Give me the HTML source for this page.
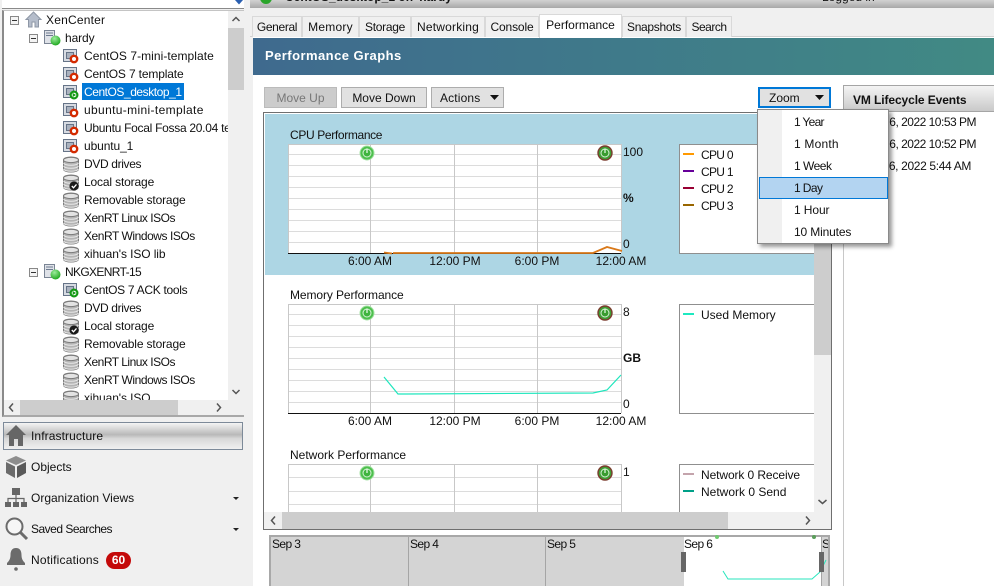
<!DOCTYPE html>
<html><head><meta charset="utf-8"><style>
html,body{margin:0;padding:0}
body{width:994px;height:586px;overflow:hidden;position:relative;background:#f0f0f0;font:12px/18px "Liberation Sans",sans-serif;color:#111;letter-spacing:0}
div,span{position:absolute;white-space:nowrap;box-sizing:border-box}
svg{position:absolute;overflow:visible}
.t{height:18px;line-height:18px}
.tab{top:16px;height:21px;line-height:21px;background:#f0f0f0;border:1px solid #d9d9d9;border-bottom:0;text-align:center}
.btn{top:87px;height:21px;line-height:20px;background:#e1e1e1;border:1px solid #adadad;text-align:center}
.sb{background:#f0f0f0}.th{background:#cdcdcd}
.leg{background:#fff;border:1px solid #8f8f8f;width:140px;height:110px}
.sw{width:11px;height:2px}
.ax{text-align:center;width:70px}
</style></head><body>
<svg width="0" height="0" style="position:absolute"><defs>
<radialGradient id="gg" cx=".4" cy=".3" r=".8"><stop offset="0" stop-color="#9cec9c"/><stop offset="1" stop-color="#0f9f0f"/></radialGradient>
<symbol id="vm" viewBox="0 0 18 18"><rect x=".5" y="2.500" width="13" height="12" fill="#d7dbe2" stroke="#667488"/><rect x="3.500" y="5.500" width="7" height="6" fill="#aab2bf" stroke="#667488"/></symbol>
<symbol id="off" viewBox="0 0 18 18"><use href="#vm" width="18" height="18"/><circle cx="11" cy="12" r="3.200" fill="#fff" stroke="#d42a00" stroke-width="2.400"/></symbol>
<symbol id="on" viewBox="0 0 18 18"><use href="#vm" width="18" height="18"/><circle cx="11" cy="12" r="3.400" fill="#fff" stroke="#149a14" stroke-width="2.200"/><path d="M9.700 10l3.400 2-3.400 2z" fill="#149a14"/></symbol>
<symbol id="disk" viewBox="0 0 18 18"><path d="M.5 5c0-4 15-4 15 0v9c0 4-15 4-15 0z" fill="#b4b4b4" stroke="#7b7b7b"/><ellipse cx="8" cy="5" rx="7.500" ry="2.600" fill="#e3e3e3" stroke="#7b7b7b"/><path d="M.5 8c2 3 13 3 15 0M.5 11c2 3 13 3 15 0M.5 14c2 3 13 3 15 0" fill="none" stroke="#e9e9e9"/></symbol>
<symbol id="local" viewBox="0 0 18 18"><use href="#disk" width="18" height="18"/><circle cx="11" cy="13" r="4.600" fill="#1a1a1a"/><path d="M8.800 13l1.700 1.800 3-3.400" fill="none" stroke="#fff" stroke-width="1.300"/></symbol>
<symbol id="host" viewBox="0 0 18 18"><rect x=".5" y="1.500" width="10" height="13" fill="#dfe2e8" stroke="#7a8494"/><path d="M2 4h7M2 6.500h7" stroke="#6d7b90"/><circle cx="11.500" cy="11.500" r="5" fill="url(#gg)"/></symbol>
<symbol id="pw" viewBox="0 0 16 16"><circle cx="8" cy="8" r="7" fill="#4dbf4d" stroke="#a5e2a5" stroke-width="1"/><circle cx="8" cy="8" r="4" fill="#3fb43f" stroke="#d7f2d7" stroke-width="1"/><path d="M8 3.500v4.500" stroke="#f2fff2" stroke-width="1.200"/></symbol>
<symbol id="pd" viewBox="0 0 16 16"><circle cx="8" cy="8" r="7" fill="#3f9e35" stroke="#7b3b2e" stroke-width="1.400"/><circle cx="8" cy="8" r="4" fill="#399c30" stroke="#d7f2d7" stroke-width="1"/><path d="M8 3.500v4.500" stroke="#eaffea" stroke-width="1.200"/></symbol>
</defs></svg>

<!-- left: search -->
<div style="left:2px;top:0;width:226px;height:9px;background:#fff;border-bottom:1px solid #8a8a8a;overflow:hidden"><span style="left:4px;top:-13px;color:#777">Search...</span></div>
<div style="left:228px;top:0;width:16px;height:9px;background:#fff;border-bottom:1px solid #8a8a8a"></div>
<svg style="left:235px;top:0" width="8" height="6"><path d="M0 0h8l-4 4.500z" fill="#2a5fb0"/></svg>

<!-- tree -->
<div style="left:2px;top:10px;width:242px;height:407px;background:#fff;border-style:solid;border-color:#c4c4c4 #f0f0f0 #a8a8a8 #8a8a8a;border-width:1px 0 2px 2px"></div>
<div style="left:4px;top:11px;width:224px;height:389px;overflow:hidden;background:#fff">
<svg style="left:6px;top:5px" width="9" height="9"><rect x=".5" y=".5" width="8" height="8" fill="#f4f4f4" stroke="#888"/><path d="M2 4.500h5" stroke="#333"/></svg>
<svg style="left:21px;top:0" width="17" height="17" viewBox="0 0 17 17"><path d="M8.500 1L1 8.500h2.500V16h3.500v-5h3v5h3.500V8.500H16z" fill="#b5bdcb" stroke="#8e97a6"/></svg>
<div class="t" style="left:42px;top:0;letter-spacing:.2px">XenCenter</div>
<svg style="left:25px;top:23px" width="9" height="9"><rect x=".5" y=".5" width="8" height="8" fill="#f4f4f4" stroke="#888"/><path d="M2 4.500h5" stroke="#333"/></svg>
<svg style="left:40px;top:18px" width="18" height="18"><use href="#host"/></svg>
<div class="t" style="left:61px;top:18px;letter-spacing:-.1px">hardy</div>

<svg style="left:59px;top:36px" width="18" height="18"><use href="#off"/></svg><div class="t" style="left:80px;top:36px;letter-spacing:.05px">CentOS 7-mini-template</div>
<svg style="left:59px;top:54px" width="18" height="18"><use href="#off"/></svg><div class="t" style="left:80px;top:54px;letter-spacing:-.15px">CentOS 7 template</div>
<svg style="left:59px;top:72px" width="18" height="18"><use href="#on"/></svg><div class="t" style="left:78px;top:72px;width:102px;background:#0078d7;color:#fff;padding-left:2px;height:17px;letter-spacing:-.45px">CentOS_desktop_1</div>
<svg style="left:59px;top:90px" width="18" height="18"><use href="#off"/></svg><div class="t" style="left:80px;top:90px;letter-spacing:.35px">ubuntu-mini-template</div>
<svg style="left:59px;top:108px" width="18" height="18"><use href="#off"/></svg><div class="t" style="left:80px;top:108px;letter-spacing:-.28px">Ubuntu Focal Fossa 20.04 template</div>
<svg style="left:59px;top:126px" width="18" height="18"><use href="#off"/></svg><div class="t" style="left:80px;top:126px;letter-spacing:-.1px">ubuntu_1</div>
<svg style="left:59px;top:144px" width="18" height="18"><use href="#disk"/></svg><div class="t" style="left:80px;top:144px;letter-spacing:-.35px">DVD drives</div>
<svg style="left:59px;top:162px" width="18" height="18"><use href="#local"/></svg><div class="t" style="left:80px;top:162px;letter-spacing:-.15px">Local storage</div>
<svg style="left:59px;top:180px" width="18" height="18"><use href="#disk"/></svg><div class="t" style="left:80px;top:180px;letter-spacing:-.15px">Removable storage</div>
<svg style="left:59px;top:198px" width="18" height="18"><use href="#disk"/></svg><div class="t" style="left:80px;top:198px;letter-spacing:-.5px">XenRT Linux ISOs</div>
<svg style="left:59px;top:216px" width="18" height="18"><use href="#disk"/></svg><div class="t" style="left:80px;top:216px;letter-spacing:-.45px">XenRT Windows ISOs</div>
<svg style="left:59px;top:234px" width="18" height="18"><use href="#disk"/></svg><div class="t" style="left:80px;top:234px;letter-spacing:-.1px">xihuan's ISO lib</div>

<svg style="left:25px;top:257px" width="9" height="9"><rect x=".5" y=".5" width="8" height="8" fill="#f4f4f4" stroke="#888"/><path d="M2 4.500h5" stroke="#333"/></svg>
<svg style="left:40px;top:252px" width="18" height="18"><use href="#host"/></svg>
<div class="t" style="left:61px;top:252px;letter-spacing:-.65px">NKGXENRT-15</div>
<svg style="left:59px;top:270px" width="18" height="18"><use href="#on"/></svg><div class="t" style="left:80px;top:270px;letter-spacing:-.3px">CentOS 7 ACK tools</div>
<svg style="left:59px;top:288px" width="18" height="18"><use href="#disk"/></svg><div class="t" style="left:80px;top:288px;letter-spacing:-.35px">DVD drives</div>
<svg style="left:59px;top:306px" width="18" height="18"><use href="#local"/></svg><div class="t" style="left:80px;top:306px;letter-spacing:-.15px">Local storage</div>
<svg style="left:59px;top:324px" width="18" height="18"><use href="#disk"/></svg><div class="t" style="left:80px;top:324px;letter-spacing:-.15px">Removable storage</div>
<svg style="left:59px;top:342px" width="18" height="18"><use href="#disk"/></svg><div class="t" style="left:80px;top:342px;letter-spacing:-.5px">XenRT Linux ISOs</div>
<svg style="left:59px;top:360px" width="18" height="18"><use href="#disk"/></svg><div class="t" style="left:80px;top:360px;letter-spacing:-.45px">XenRT Windows ISOs</div>
<svg style="left:59px;top:378px" width="18" height="18"><use href="#disk"/></svg><div class="t" style="left:80px;top:378px;letter-spacing:-.1px">xihuan's ISO</div>
</div>
<!-- tree scrollbars -->
<div class="sb" style="left:228px;top:11px;width:16px;height:389px"></div>
<div class="th" style="left:228px;top:28px;width:16px;height:62px"></div>
<svg style="left:232px;top:16px" width="8" height="6"><path d="M.5 5L4 1.500 7.500 5" fill="none" stroke="#555" stroke-width="1.500"/></svg>
<svg style="left:232px;top:389px" width="8" height="6"><path d="M.5 1L4 4.500 7.500 1" fill="none" stroke="#555" stroke-width="1.500"/></svg>
<div class="sb" style="left:4px;top:400px;width:240px;height:15px"></div>
<div class="th" style="left:20px;top:400px;width:158px;height:15px"></div>
<svg style="left:8px;top:403px" width="6" height="9"><path d="M5 .5L1.500 4.500 5 8.500" fill="none" stroke="#555" stroke-width="1.500"/></svg>
<svg style="left:216px;top:403px" width="6" height="9"><path d="M1 .5L4.500 4.500 1 8.500" fill="none" stroke="#555" stroke-width="1.500"/></svg>

<!-- nav -->
<div style="left:3px;top:422px;width:240px;height:28px;border:1px solid #7d8a99;background:linear-gradient(#f5f5f5,#b9b9b9 45%,#d8d8d8 60%,#f0f0f0)"></div>
<svg style="left:5px;top:425px" width="22" height="22" viewBox="0 0 22 22"><path d="M11 0L1 10h3v11h5v-7h4v7h5V10h3z" fill="#666"/></svg>
<div class="t" style="left:31px;top:427px;letter-spacing:.1px">Infrastructure</div>
<svg style="left:5px;top:456px" width="22" height="22" viewBox="0 0 22 22"><path d="M11 0l10 4.500L11 9 1 4.500z" fill="#8d8d8d"/><path d="M1 6l9 4.500V22L1 17z" fill="#6b6b6b"/><path d="M21 6l-9 4.500V22l9-5z" fill="#5a5a5a"/></svg>
<div class="t" style="left:31px;top:458px">Objects</div>
<svg style="left:5px;top:488px" width="22" height="20" viewBox="0 0 22 20"><rect x="7" y="0" width="8" height="7" fill="#666"/><rect x="0" y="14" width="6" height="5" fill="#666"/><rect x="8" y="14" width="6" height="5" fill="#666"/><rect x="16" y="14" width="6" height="5" fill="#666"/><path d="M11 7v7M3 14v-3.500h16V14" fill="none" stroke="#666" stroke-width="1.200"/></svg>
<div class="t" style="left:31px;top:489px">Organization Views</div>
<svg style="left:233px;top:497px" width="7" height="4"><path d="M0 0h6l-3 3z" fill="#222"/></svg>
<svg style="left:5px;top:517px" width="24" height="24" viewBox="0 0 24 24"><circle cx="9.500" cy="9.500" r="8" fill="#f6f6f6" stroke="#6b6b6b" stroke-width="2"/><path d="M15.500 15.500L22 22" stroke="#6b6b6b" stroke-width="3"/></svg>
<div class="t" style="left:31px;top:520px;letter-spacing:-.5px">Saved Searches</div>
<svg style="left:233px;top:528px" width="7" height="4"><path d="M0 0h6l-3 3z" fill="#222"/></svg>
<svg style="left:7px;top:548px" width="18" height="23" viewBox="0 0 18 23"><path d="M9 0c-4 0-5.500 3-5.500 7 0 4-1.500 6-3.500 8v2h18v-2c-2-2-3.500-4-3.500-8 0-4-1.500-7-5.500-7z" fill="#6b6b6b"/><circle cx="9" cy="21" r="1.800" fill="#6b6b6b"/></svg>
<div class="t" style="left:31px;top:551px;letter-spacing:.2px">Notifications</div>
<div style="left:106px;top:552px;width:25px;height:17px;border-radius:9px;background:#c40a0a;color:#fff;font-weight:bold;text-align:center;line-height:17px">60</div>

<!-- title bar -->
<div style="left:250px;top:0;width:744px;height:8px;background:linear-gradient(#d2d2d2,#a8a8a8);overflow:hidden">
<span style="left:35px;top:-12px;font-weight:bold">CentOS_desktop_1 on 'hardy'</span>
<span style="left:572px;top:-12px">Logged in</span>
<svg style="left:10px;top:-8px" width="12" height="12"><circle cx="6" cy="6" r="6" fill="#2aa52a"/></svg>
</div>

<!-- content bg -->
<div style="left:253px;top:37px;width:741px;height:549px;background:#fff"></div>
<div style="left:250px;top:36px;width:744px;height:1px;background:#d0d0d0"></div>

<!-- tabs -->
<div class="tab" style="left:252px;width:50px;letter-spacing:-.35px">General</div>
<div class="tab" style="left:302px;width:57px;letter-spacing:.25px">Memory</div>
<div class="tab" style="left:359px;width:52px;letter-spacing:-.3px">Storage</div>
<div class="tab" style="left:411px;width:74px;letter-spacing:.2px">Networking</div>
<div class="tab" style="left:485px;width:54px;letter-spacing:-.15px">Console</div>
<div class="tab" style="left:539px;top:14px;width:83px;height:24px;background:#fff;line-height:21px">Performance</div>
<div class="tab" style="left:622px;width:64px;letter-spacing:-.3px">Snapshots</div>
<div class="tab" style="left:686px;width:46px;letter-spacing:-.5px">Search</div>

<!-- header -->
<div style="left:253px;top:38px;width:741px;height:37px;background:linear-gradient(90deg,#3f6a8e,#3f7a8a 50%,#418a84);color:#fff;font-weight:bold;font-size:13px;line-height:35px;padding-left:12px;letter-spacing:.45px">Performance Graphs</div>

<!-- buttons -->
<div class="btn" style="left:264px;width:73px;background:#ccc;border-color:#bbb;color:#777">Move Up</div>
<div class="btn" style="left:341px;width:86px">Move Down</div>
<div class="btn" style="left:431px;width:73px;text-align:left;padding-left:8px;letter-spacing:.15px">Actions</div>
<svg style="left:490px;top:95px" width="9" height="6"><path d="M0 0h9l-4.500 5z" fill="#111"/></svg>
<div class="btn" style="left:758px;width:73px;border:2px solid #0078d7;text-align:left;padding-left:9px;line-height:18px">Zoom</div>
<svg style="left:815px;top:95px" width="9" height="6"><path d="M0 0h9l-4.500 5z" fill="#111"/></svg>

<!-- right panel -->
<div style="left:843px;top:85px;width:151px;height:27px;background:linear-gradient(#f4f4f4,#c9c9c9);border:1px solid #a5a5a5;border-right:0;font-weight:bold;line-height:28px;padding-left:9px;letter-spacing:-.1px">VM Lifecycle Events</div>
<div style="left:843px;top:112px;width:1px;height:474px;background:#c8c8c8"></div>
<div class="t" style="right:18px;top:113px;letter-spacing:-.5px">Sep 6, 2022 10:53 PM</div>
<div class="t" style="right:18px;top:135px;letter-spacing:-.5px">Sep 6, 2022 10:52 PM</div>
<div class="t" style="right:23px;top:157px;letter-spacing:-.35px">Sep 6, 2022 5:44 AM</div>

<!-- graph panel -->
<div style="left:263px;top:112px;width:569px;height:418px;background:#fff;border:1px solid #6f6f6f;overflow:hidden">
<div style="left:1px;top:1px;width:565px;height:161px;background:#add6e4"></div>
<svg style="left:-264px;top:-113px" width="994" height="586" shape-rendering="crispEdges">
<rect x="288" y="144" width="333" height="109" fill="#fff"/>
<rect x="288" y="304" width="333" height="109" fill="#fff"/>
<g stroke="#dcdcdc" fill="none">
<path d="M288 154.500h333M288 165.500h333M288 176.500h333M288 187.500h333M288 198.500h333M288 209.500h333M288 220.500h333M288 231.500h333M288 242.500h333"/>
<path d="M288 314.500h333M288 325.500h333M288 336.500h333M288 347.500h333M288 358.500h333M288 369.500h333M288 380.500h333M288 391.500h333M288 402.500h333"/>
<path d="M288 477.500h333M288 491.500h333M288 504.500h333"/>
</g>
<g stroke="#c8c8c8" fill="none">
<path d="M370.500 144v109M454.500 144v109M537.500 144v109"/>
<path d="M370.500 304v109M454.500 304v109M537.500 304v109"/>
<path d="M370.500 464v48M454.500 464v48M537.500 464v48"/>
<path d="M288 144.500h333M288.500 144v109M621.500 144v109M288 304.500h333M288.500 304v109M621.500 304v109M288 464.500h333M288.500 464v48M621.500 464v48"/>
</g>
<path d="M288 253.500h333M288 413.500h333" stroke="#111"/>
</svg>
<svg style="left:-264px;top:-113px" width="994" height="586">
<path d="M384 252.500l8 1M393 253h200l14-6 15 4" fill="none" stroke="#d9791a" stroke-width="1.800"/>
<path d="M384 377l14 17h8l187-1 14-3 14-15" fill="none" stroke="#1fe6bd" stroke-width="1.200"/>
<use href="#pw" x="359" y="145" width="16" height="16"/><use href="#pd" x="597" y="145" width="16" height="16"/>
<use href="#pw" x="359" y="305" width="16" height="16"/><use href="#pd" x="597" y="305" width="16" height="16"/>
<use href="#pw" x="359" y="465" width="16" height="16"/><use href="#pd" x="597" y="465" width="16" height="16"/>
</svg>
<div class="t" style="left:26px;top:13px;letter-spacing:-.35px">CPU Performance</div>
<div class="t" style="left:26px;top:173px;letter-spacing:-.1px">Memory Performance</div>
<div class="t" style="left:26px;top:333px">Network Performance</div>
<div class="t" style="left:359px;top:30px">100</div>
<div class="t" style="left:359px;top:76px;font-weight:bold">%</div>
<div class="t" style="left:359px;top:122px">0</div>
<div class="t ax" style="left:71px;top:139px">6:00 AM</div><div class="t ax" style="left:156px;top:139px">12:00 PM</div><div class="t ax" style="left:238px;top:139px">6:00 PM</div><div class="t ax" style="left:322px;top:139px">12:00 AM</div>
<div class="t" style="left:359px;top:190px">8</div>
<div class="t" style="left:359px;top:236px;font-weight:bold">GB</div>
<div class="t" style="left:359px;top:282px">0</div>
<div class="t ax" style="left:71px;top:299px">6:00 AM</div><div class="t ax" style="left:156px;top:299px">12:00 PM</div><div class="t ax" style="left:238px;top:299px">6:00 PM</div><div class="t ax" style="left:322px;top:299px">12:00 AM</div>
<div class="t" style="left:359px;top:350px">1</div>
<div class="leg" style="left:415px;top:31px"></div>
<div class="leg" style="left:415px;top:191px"></div>
<div class="leg" style="left:415px;top:351px"></div>
<div class="sw" style="left:419px;top:40px;background:#f90"></div><div class="t" style="left:437px;top:33px;letter-spacing:-.7px">CPU 0</div>
<div class="sw" style="left:419px;top:57px;background:#609"></div><div class="t" style="left:437px;top:50px;letter-spacing:-.7px">CPU 1</div>
<div class="sw" style="left:419px;top:74px;background:#903"></div><div class="t" style="left:437px;top:67px;letter-spacing:-.7px">CPU 2</div>
<div class="sw" style="left:419px;top:91px;background:#960"></div><div class="t" style="left:437px;top:84px;letter-spacing:-.7px">CPU 3</div>
<div class="sw" style="left:419px;top:200px;background:#1de9c0"></div><div class="t" style="left:437px;top:193px">Used Memory</div>
<div class="sw" style="left:419px;top:360px;background:#c4a4ac"></div><div class="t" style="left:437px;top:353px;letter-spacing:-.1px">Network 0 Receive</div>
<div class="sw" style="left:419px;top:377px;background:#00a088"></div><div class="t" style="left:437px;top:370px">Network 0 Send</div>
<!-- scrollbars -->
<div class="sb" style="left:550px;top:0;width:17px;height:399px"></div>
<div class="th" style="left:550px;top:20px;width:17px;height:222px"></div>
<svg style="left:554px;top:386px" width="9" height="6"><path d="M.5 1L4.500 4.500 8.500 1" fill="none" stroke="#555" stroke-width="1.500"/></svg>
<div class="sb" style="left:0;top:399px;width:567px;height:17px"></div>
<div class="th" style="left:18px;top:399px;width:446px;height:17px"></div>
<svg style="left:6px;top:403px" width="6" height="9"><path d="M5 .5L1.500 4.500 5 8.500" fill="none" stroke="#555" stroke-width="1.500"/></svg>
<svg style="left:541px;top:403px" width="6" height="9"><path d="M1 .5L4.500 4.500 1 8.500" fill="none" stroke="#555" stroke-width="1.500"/></svg>
</div>

<!-- timeline -->
<div style="left:269px;top:535px;width:561px;height:51px;background:#d4d4d4;border:2px solid #a8a8a8;border-bottom:0;overflow:hidden">
<div style="left:413px;top:-2px;width:137px;height:51px;background:#fff"></div>
<div style="left:137px;top:0;width:1px;height:51px;background:#a5a5a5"></div>
<div style="left:274px;top:0;width:1px;height:51px;background:#a5a5a5"></div>
<div style="left:550px;top:0;width:1px;height:51px;background:#a5a5a5"></div>
<div class="t" style="left:1px;top:-2px;letter-spacing:-.6px">Sep 3</div>
<div class="t" style="left:139px;top:-2px;letter-spacing:-.6px">Sep 4</div>
<div class="t" style="left:276px;top:-2px;letter-spacing:-.6px">Sep 5</div>
<div class="t" style="left:413px;top:-2px;letter-spacing:-.6px">Sep 6</div>
<div class="t" style="left:551px;top:-2px">S</div>
</div>
<svg style="left:0;top:0" width="994" height="586">
<path d="M723 571l5 8h84l8-7 6-12" fill="none" stroke="#27e6bd"/>
<circle cx="717" cy="537" r="2" fill="#6fca6f"/><circle cx="814" cy="537" r="2" fill="#5a9e5a"/>
<rect x="681" y="552" width="5" height="20" fill="#666"/><rect x="819" y="552" width="5" height="20" fill="#666"/>
</svg>

<!-- zoom menu -->
<div style="left:757px;top:109px;width:132px;height:135px;background:#fff;border:1px solid #8a8a8a;box-shadow:3px 3px 4px rgba(0,0,0,.4)">
<div style="left:0;top:0;width:24px;height:133px;background:#f0f0f0"></div>
<div style="left:1px;top:67px;width:129px;height:22px;background:#b3d4f1;border:1px solid #0078d7"></div>
<div class="t" style="left:36px;top:3px;letter-spacing:-.7px">1 Year</div>
<div class="t" style="left:36px;top:25px;letter-spacing:.2px">1 Month</div>
<div class="t" style="left:36px;top:47px;letter-spacing:-.5px">1 Week</div>
<div class="t" style="left:36px;top:69px;letter-spacing:-.6px">1 Day</div>
<div class="t" style="left:36px;top:91px;letter-spacing:-.1px">1 Hour</div>
<div class="t" style="left:36px;top:113px;letter-spacing:-.15px">10 Minutes</div>
</div>
</body></html>
